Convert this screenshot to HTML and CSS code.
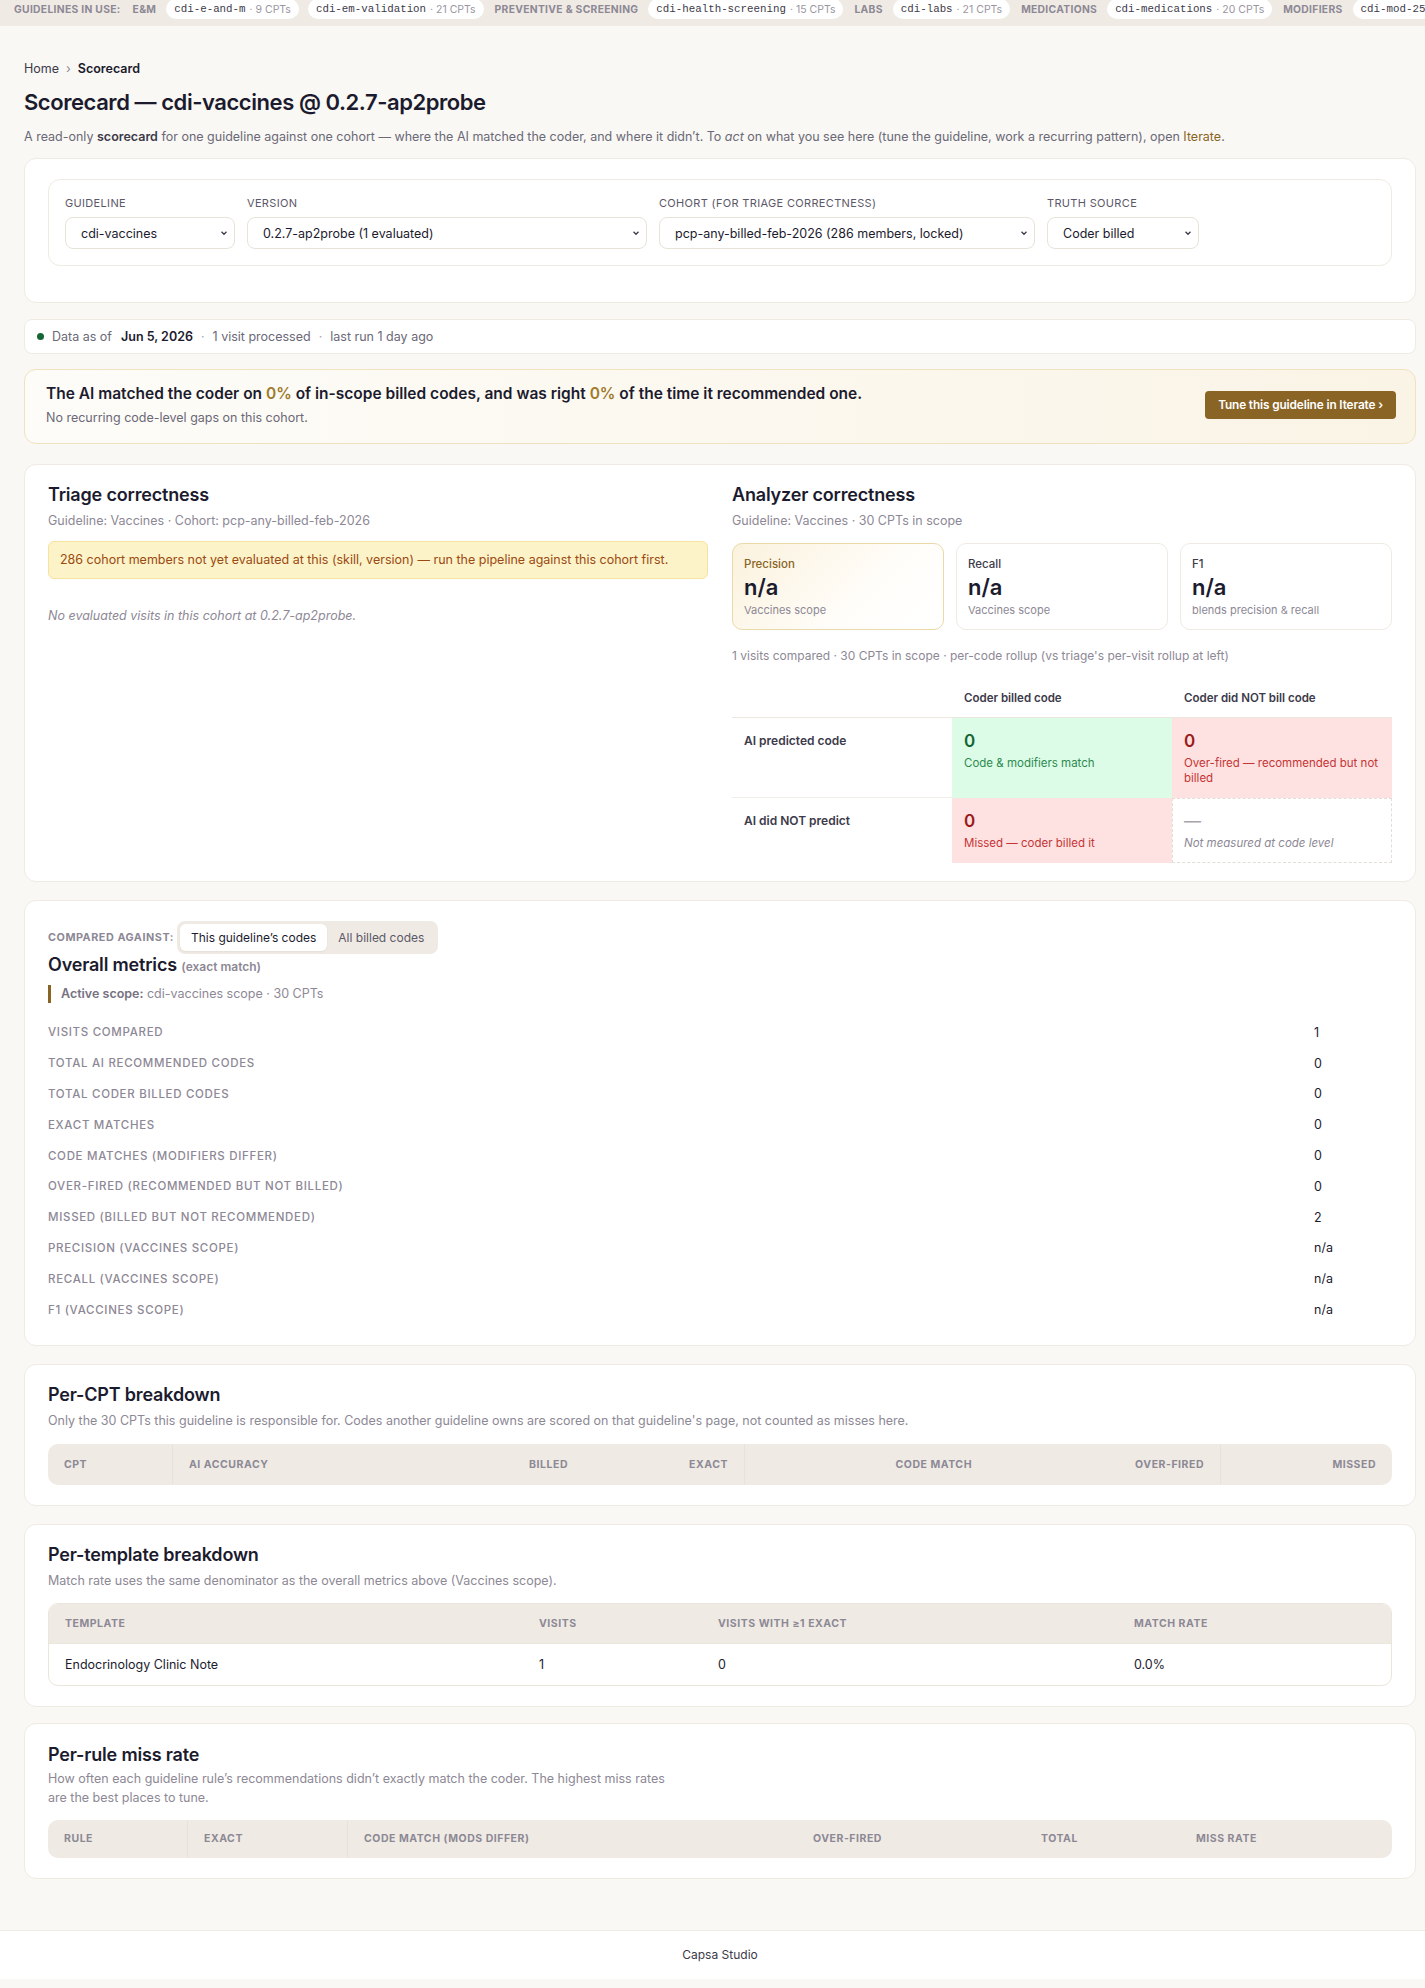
FILE: index.html
```html
<!DOCTYPE html>
<html lang="en">
<head>
    <meta charset="UTF-8">
    <meta name="viewport" content="width=device-width, initial-scale=1.0">
    <title>Scorecard</title>
    <link rel="stylesheet" href="styles.css">
</head>
<body>
    <div class="guide-bar">
        <span class="grp">Guidelines in use:</span>
        <span class="grp">E&amp;M</span>
        <span class="pill"><span class="pill-name">cdi-e-and-m</span><span class="pill-count">· 9 CPTs</span></span>
        <span class="pill"><span class="pill-name">cdi-em-validation</span><span class="pill-count">· 21 CPTs</span></span>
        <span class="grp">Preventive &amp; Screening</span>
        <span class="pill"><span class="pill-name">cdi-health-screening</span><span class="pill-count">· 15 CPTs</span></span>
        <span class="grp">Labs</span>
        <span class="pill"><span class="pill-name">cdi-labs</span><span class="pill-count">· 21 CPTs</span></span>
        <span class="grp">Medications</span>
        <span class="pill"><span class="pill-name">cdi-medications</span><span class="pill-count">· 20 CPTs</span></span>
        <span class="grp">Modifiers</span>
        <span class="pill"><span class="pill-name">cdi-mod-25</span><span class="pill-count">· 4 CPTs</span></span>
    </div>

    <div class="page">
        <div class="crumbs"><a href="#">Home</a><span class="sep">›</span><b>Scorecard</b></div>
        <h1>Scorecard — cdi-vaccines @ 0.2.7-ap2probe</h1>
        <p class="lead">A read-only <b>scorecard</b> for one guideline against one cohort — where the AI matched the coder, and where it didn’t. To <i>act</i> on what you see here (tune the guideline, work a recurring pattern), open <a href="#">Iterate</a>.</p>

        <div class="card filter-card">
            <div class="filters">
                <label class="field">
                    <span class="field-label">Guideline</span>
                    <select class="w-guide"><option>cdi-vaccines</option></select>
                </label>
                <label class="field">
                    <span class="field-label">Version</span>
                    <select class="w-version"><option>0.2.7-ap2probe (1 evaluated)</option></select>
                </label>
                <label class="field">
                    <span class="field-label">Cohort (for triage correctness)</span>
                    <select class="w-cohort"><option>pcp-any-billed-feb-2026 (286 members, locked)</option></select>
                </label>
                <label class="field">
                    <span class="field-label">Truth source</span>
                    <select class="w-truth"><option>Coder billed</option></select>
                </label>
            </div>
        </div>

        <div class="status">
            <span class="dot"></span>
            <span>Data as of</span><b>Jun 5, 2026</b>
            <span class="sep">·</span><span>1 visit processed</span>
            <span class="sep">·</span><span>last run 1 day ago</span>
        </div>

        <div class="banner">
            <div>
                <div class="banner-title">The AI matched the coder on <span class="pct">0%</span> of in-scope billed codes, and was right <span class="pct">0%</span> of the time it recommended one.</div>
                <div class="banner-sub">No recurring code-level gaps on this cohort.</div>
            </div>
            <button class="btn-gold">Tune this guideline in Iterate ›</button>
        </div>

        <div class="card split-card">
            <div class="col">
                <h2>Triage correctness</h2>
                <p class="muted">Guideline: Vaccines · Cohort: pcp-any-billed-feb-2026</p>
                <div class="warn">286 cohort members not yet evaluated at this (skill, version) — run the pipeline against this cohort first.</div>
                <p class="empty">No evaluated visits in this cohort at 0.2.7-ap2probe.</p>
            </div>
            <div class="col">
                <h2>Analyzer correctness</h2>
                <p class="muted">Guideline: Vaccines · 30 CPTs in scope</p>
                <div class="stat-row">
                    <div class="stat stat-main">
                        <div class="stat-label">Precision</div>
                        <div class="stat-value">n/a</div>
                        <div class="stat-sub">Vaccines scope</div>
                    </div>
                    <div class="stat">
                        <div class="stat-label">Recall</div>
                        <div class="stat-value">n/a</div>
                        <div class="stat-sub">Vaccines scope</div>
                    </div>
                    <div class="stat">
                        <div class="stat-label">F1</div>
                        <div class="stat-value">n/a</div>
                        <div class="stat-sub">blends precision &amp; recall</div>
                    </div>
                </div>
                <p class="note">1 visits compared · 30 CPTs in scope · per-code rollup (vs triage's per-visit rollup at left)</p>
                <div class="matrix">
                    <div class="mx-head"></div>
                    <div class="mx-head">Coder billed code</div>
                    <div class="mx-head">Coder did NOT bill code</div>

                    <div class="mx-label">AI predicted code</div>
                    <div class="mx-cell good"><div class="mx-num">0</div><div class="mx-desc">Code &amp; modifiers match</div></div>
                    <div class="mx-cell bad"><div class="mx-num">0</div><div class="mx-desc">Over-fired — recommended but not billed</div></div>

                    <div class="mx-label last">AI did NOT predict</div>
                    <div class="mx-cell bad"><div class="mx-num">0</div><div class="mx-desc">Missed — coder billed it</div></div>
                    <div class="mx-cell na"><div class="mx-num">—</div><div class="mx-desc">Not measured at code level</div></div>
                </div>
            </div>
        </div>

        <div class="card metrics-card">
            <div class="compare">
                <span class="compare-label">Compared against:</span>
                <div class="toggle">
                    <button class="on">This guideline’s codes</button>
                    <button>All billed codes</button>
                </div>
            </div>
            <h2>Overall metrics <small>(exact match)</small></h2>
            <div class="scope"><b>Active scope:</b> cdi-vaccines scope · 30 CPTs</div>
            <div class="metric-list">
                <div class="metric"><span>Visits compared</span><b>1</b></div>
                <div class="metric"><span>Total AI recommended codes</span><b>0</b></div>
                <div class="metric"><span>Total coder billed codes</span><b>0</b></div>
                <div class="metric"><span>Exact matches</span><b>0</b></div>
                <div class="metric"><span>Code matches (modifiers differ)</span><b>0</b></div>
                <div class="metric"><span>Over-fired (recommended but not billed)</span><b>0</b></div>
                <div class="metric"><span>Missed (billed but not recommended)</span><b>2</b></div>
                <div class="metric"><span>Precision (Vaccines scope)</span><b>n/a</b></div>
                <div class="metric"><span>Recall (Vaccines scope)</span><b>n/a</b></div>
                <div class="metric"><span>F1 (Vaccines scope)</span><b>n/a</b></div>
            </div>
        </div>

        <div class="card table-card cpt-card">
            <h2>Per-CPT breakdown</h2>
            <p class="muted">Only the 30 CPTs this guideline is responsible for. Codes another guideline owns are scored on that guideline's page, not counted as misses here.</p>
            <table class="grid-table cpt-table">
                <thead>
                    <tr>
                        <th>CPT</th>
                        <th class="split">AI accuracy</th>
                        <th class="num">Billed</th>
                        <th class="num">Exact</th>
                        <th class="num split">Code match</th>
                        <th class="num">Over-fired</th>
                        <th class="num split">Missed</th>
                    </tr>
                </thead>
            </table>
        </div>

        <div class="card table-card tpl-card">
            <h2>Per-template breakdown</h2>
            <p class="muted">Match rate uses the same denominator as the overall metrics above (Vaccines scope).</p>
            <table class="grid-table boxed tpl-table">
                <thead>
                    <tr>
                        <th>Template</th>
                        <th>Visits</th>
                        <th>Visits with ≥1 exact</th>
                        <th>Match rate</th>
                    </tr>
                </thead>
                <tbody>
                    <tr>
                        <td>Endocrinology Clinic Note</td>
                        <td>1</td>
                        <td>0</td>
                        <td>0.0%</td>
                    </tr>
                </tbody>
            </table>
        </div>

        <div class="card table-card rule-card">
            <h2>Per-rule miss rate</h2>
            <p class="muted narrow">How often each guideline rule’s recommendations didn’t exactly match the coder. The highest miss rates are the best places to tune.</p>
            <table class="grid-table rule-table">
                <thead>
                    <tr>
                        <th>Rule</th>
                        <th class="split">Exact</th>
                        <th class="split">Code match (mods differ)</th>
                        <th>Over-fired</th>
                        <th>Total</th>
                        <th>Miss rate</th>
                    </tr>
                </thead>
            </table>
        </div>
    </div>

    <footer class="footer">Capsa Studio</footer>
</body>
</html>
```

FILE: styles.css
```css
body {
    margin: 0;
    padding: 0;
    min-width: 1440px;
    font-family: Inter, "Noto Sans", sans-serif;
    font-size: 12.5px;
    color: #1c1b2e;
    background-color: #f9f8f4;
}

a {
    color: #8a6424;
    text-decoration: none;
}

/* top strip of guidelines */
.guide-bar {
    display: flex;
    align-items: flex-start;
    gap: 9px;
    height: 26px;
    padding: 0 12px;
    background-color: #efebe4;
    white-space: nowrap;
    overflow: hidden;
}

.grp {
    font-size: 10.3px;
    font-weight: 700;
    letter-spacing: 0.03em;
    text-transform: uppercase;
    color: #8d8895;
    line-height: 19px;
    margin: 0 1px 0 2px;
}

.pill {
    display: inline-flex;
    align-items: center;
    gap: 4px;
    height: 20px;
    margin-top: -1px;
    padding: 0 8px;
    background-color: #fff;
    border-radius: 10px;
}

.pill-name {
    font-family: "Liberation Mono", monospace;
    font-size: 10.8px;
    color: #3d3a4a;
}

.pill-count {
    font-size: 10.5px;
    color: #9a96a0;
}

.page {
    width: 1392px;
    margin: 0 24px;
}

.crumbs {
    margin-top: 34px;
    line-height: 18px;
    font-size: 12.5px;
}

.crumbs a {
    color: #3d3a4a;
}

.crumbs .sep {
    margin: 0 7px;
    color: #8d8895;
}

.crumbs b {
    font-weight: 600;
}

h1 {
    margin: 9px 0 0;
    font-size: 22px;
    line-height: 30px;
    font-weight: 600;
    letter-spacing: -0.02em;
}

.lead {
    margin: 11px 0 0;
    line-height: 18px;
    color: #6b6877;
}

.lead b {
    color: #3d3a4a;
    font-weight: 600;
}

.card {
    background-color: #fff;
    border: 1px solid #efebe3;
    border-radius: 12px;
}

h2 {
    margin: 0;
    font-size: 18px;
    line-height: 22px;
    font-weight: 600;
    letter-spacing: -0.01em;
}

.muted {
    margin: 6px 0 0;
    line-height: 18px;
    color: #8d8895;
}

/* filters */
.filter-card {
    margin-top: 12px;
    padding: 20px 23px 36px;
}

.filters {
    display: flex;
    gap: 12px;
    padding: 16px 16px 16px;
    border: 1px solid #efebe3;
    border-radius: 12px;
}

.field {
    display: flex;
    flex-direction: column;
}

.field-label {
    font-size: 11px;
    line-height: 14px;
    letter-spacing: 0.03em;
    text-transform: uppercase;
    color: #5c5868;
    margin-bottom: 7px;
}

.field select {
    appearance: none;
    height: 32px;
    padding: 0 24px 0 15px;
    font-family: inherit;
    font-size: 12.5px;
    color: #1c1b2e;
    background-color: #fff;
    background-image: url("data:image/svg+xml,%3Csvg xmlns='http://www.w3.org/2000/svg' width='10' height='10' viewBox='0 0 10 10'%3E%3Cpath d='M2.5 3.8l2.5 2.5 2.5-2.5' fill='none' stroke='%233d3a4a' stroke-width='1.3'/%3E%3C/svg%3E");
    background-repeat: no-repeat;
    background-position: right 5px center;
    border: 1px solid #e8e3d8;
    border-radius: 8px;
}

.w-guide { width: 170px; }
.w-version { width: 400px; }
.w-cohort { width: 376px; }
.w-truth { width: 152px; }

/* freshness line */
.status {
    display: flex;
    align-items: center;
    gap: 7px;
    height: 33px;
    margin-top: 16px;
    padding: 0 12px;
    background-color: #fff;
    border: 1px solid #efebe3;
    border-radius: 8px;
    font-size: 12.5px;
    color: #6b6877;
}

.status .dot {
    width: 7px;
    height: 7px;
    margin-right: 1px;
    border-radius: 50%;
    background-color: #166534;
}

.status b {
    margin-left: 2px;
    font-weight: 600;
    color: #1c1b2e;
}

.status .sep {
    color: #a9a5ae;
    margin: 0 1px;
}

/* summary banner */
.banner {
    display: flex;
    justify-content: space-between;
    align-items: center;
    margin-top: 15px;
    padding: 14px 19px 17px 21px;
    background: linear-gradient(90deg, #fdfcf8 0%, #faf4e6 100%);
    border: 1px solid #f0e2bf;
    border-radius: 12px;
}

.banner-title {
    font-size: 15.5px;
    line-height: 20px;
    font-weight: 600;
}

.banner-title .pct {
    color: #a07a2c;
}

.banner-sub {
    margin-top: 5px;
    line-height: 17px;
    color: #6b6877;
}

.btn-gold {
    height: 28px;
    padding: 0 13px;
    font-family: inherit;
    font-size: 11.8px;
    font-weight: 600;
    color: #fff;
    background-color: #8a6424;
    border: none;
    border-radius: 4px;
    letter-spacing: -0.01em;
}

/* triage + analyzer */
.split-card {
    display: grid;
    grid-template-columns: 1fr 1fr;
    gap: 24px;
    margin-top: 20px;
    padding: 19px 23px 18px;
}

.warn {
    margin-top: 11px;
    padding: 9px 11px;
    line-height: 18px;
    color: #9a4a12;
    background-color: #fdf3c8;
    border: 1px solid #f7e3a0;
    border-radius: 6px;
}

.empty {
    margin: 28px 0 0;
    line-height: 18px;
    font-style: italic;
    color: #8d8895;
}

.stat-row {
    display: grid;
    grid-template-columns: repeat(3, 1fr);
    gap: 12px;
    margin-top: 13px;
}

.stat {
    height: 61px;
    padding: 12px 11px 12px;
    border: 1px solid #efebe3;
    border-radius: 10px;
}

.stat-main {
    background: linear-gradient(135deg, #fbf2dd 0%, #fffdf9 60%, #fff 100%);
    border-color: #ecd9a8;
}

.stat-label {
    font-size: 11.5px;
    line-height: 16px;
    font-weight: 500;
    color: #3d3a4a;
}

.stat-main .stat-label {
    color: #8a6424;
}

.stat-value {
    margin-top: 2px;
    font-size: 22px;
    line-height: 26px;
    font-weight: 600;
}

.stat-sub {
    margin-top: 3px;
    font-size: 11px;
    line-height: 14px;
    color: #8d8895;
}

.note {
    margin: 18px 0 0;
    font-size: 12px;
    line-height: 16px;
    color: #8d8895;
}

.matrix {
    display: grid;
    grid-template-columns: repeat(3, 1fr);
    margin-top: 16px;
}

.mx-head {
    height: 37px;
    padding: 0 12px;
    font-size: 11.5px;
    font-weight: 600;
    line-height: 37px;
    color: #3d3a4a;
    border-bottom: 1px solid #ebe7df;
}

.mx-label {
    padding: 12px;
    font-size: 12px;
    line-height: 22px;
    font-weight: 600;
    color: #3d3a4a;
    border-bottom: 1px solid #f1eee8;
}

.mx-label.last {
    border-bottom: none;
}

.mx-cell {
    padding: 12px 12px 12px;
}

.mx-num {
    font-size: 17px;
    line-height: 22px;
    font-weight: 600;
}

.mx-desc {
    margin-top: 4px;
    font-size: 11.5px;
    line-height: 15px;
}

.good {
    background-color: #dcfce7;
}

.good .mx-num { color: #166534; }
.good .mx-desc { color: #2f8a4f; }

.bad {
    background-color: #fee2e2;
}

.bad .mx-num { color: #991b1b; }
.bad .mx-desc { color: #c53434; }

.na {
    border: 1px dashed #e2ded6;
    padding: 11px 11px 11px;
}

.na .mx-num { color: #a9a5ae; font-weight: 400; }
.na .mx-desc { color: #8d8895; font-style: italic; }

/* overall metrics */
.metrics-card {
    margin-top: 18px;
    padding: 20px 23px 20px;
}

.compare {
    display: flex;
    align-items: center;
    gap: 3px;
}

.compare-label {
    font-size: 10.8px;
    font-weight: 700;
    letter-spacing: 0.05em;
    text-transform: uppercase;
    color: #8d8895;
}

.toggle {
    display: flex;
    padding: 3px;
    background-color: #efebe4;
    border-radius: 8px;
}

.toggle button {
    height: 27px;
    padding: 0 11px;
    font-family: inherit;
    font-size: 12px;
    color: #5c5868;
    background: none;
    border: none;
    border-radius: 6px;
}

.toggle button.on {
    color: #1c1b2e;
    background-color: #fff;
    box-shadow: 0 1px 2px rgba(0, 0, 0, 0.05);
}

.metrics-card h2 small {
    font-size: 12px;
    font-weight: 600;
    color: #8d8895;
    letter-spacing: 0;
}

.scope {
    margin-top: 7px;
    padding-left: 10px;
    line-height: 18px;
    color: #8d8895;
    border-left: 3px solid #8a6424;
}

.scope b {
    font-weight: 600;
    color: #76727f;
}

.metric-list {
    margin-top: 14px;
}

.metric {
    display: grid;
    grid-template-columns: 1fr 78px;
    align-items: center;
    height: 30.8px;
}

.metric span {
    font-size: 11.5px;
    font-weight: 500;
    letter-spacing: 0.06em;
    text-transform: uppercase;
    color: #8d8895;
}

.metric b {
    font-weight: 400;
    color: #1c1b2e;
}

/* breakdown tables */
.table-card {
    margin-top: 18px;
    padding: 19px 23px 20px;
}

.grid-table {
    width: 100%;
    margin-top: 14px;
    border-collapse: separate;
    border-spacing: 0;
    table-layout: fixed;
}

.grid-table th,
.grid-table td {
    box-sizing: border-box;
}

.grid-table th {
    height: 41px;
    padding: 0 16px;
    text-align: left;
    font-size: 10.5px;
    font-weight: 700;
    letter-spacing: 0.05em;
    text-transform: uppercase;
    color: #8d8895;
    background-color: #efebe4;
    white-space: nowrap;
}

.grid-table th:first-child {
    border-radius: 10px 0 0 10px;
}

.grid-table th:last-child {
    border-radius: 0 10px 10px 0;
}

.grid-table th.split {
    border-left: 1px solid #e8e3da;
}

.grid-table th.num {
    text-align: right;
}

.cpt-table th:nth-child(1) { width: 124px; }
.cpt-table th:nth-child(2) { width: 272px; }
.cpt-table th:nth-child(3) { width: 140px; }
.cpt-table th:nth-child(4) { width: 160px; }
.cpt-table th:nth-child(5) { width: 244px; }
.cpt-table th:nth-child(6) { width: 232px; }

.tpl-card {
    padding-top: 19px;
    padding-bottom: 20px;
}

.grid-table.boxed {
    margin-top: 13px;
    border: 1px solid #ebe6dc;
    border-radius: 10px;
    overflow: hidden;
}

.boxed th {
    height: 39px;
    border-radius: 0 !important;
}

.boxed td {
    height: 42px;
    padding: 0 16px;
    border-top: 1px solid #ebe6dc;
}

.tpl-table th:nth-child(1) { width: 474px; }
.tpl-table th:nth-child(2) { width: 179px; }
.tpl-table th:nth-child(3) { width: 416px; }

.rule-card {
    margin-top: 16px;
    padding-top: 20px;
}

.narrow {
    max-width: 630px;
    margin-top: 3px;
    line-height: 19px;
}

.rule-table {
    margin-top: 13px;
}

.rule-table th {
    height: 38px;
}

.rule-table th:nth-child(1) { width: 139px; }
.rule-table th:nth-child(2) { width: 160px; }
.rule-table th:nth-child(3) { width: 450px; }
.rule-table th:nth-child(4) { width: 228px; }
.rule-table th:nth-child(5) { width: 155px; }

.footer {
    margin-top: 51px;
    height: 48px;
    line-height: 48px;
    text-align: center;
    font-size: 12px;
    color: #3d3a4a;
    background-color: #fff;
    border-top: 1px solid #efebe3;
    margin-bottom: 10px;
}
```
